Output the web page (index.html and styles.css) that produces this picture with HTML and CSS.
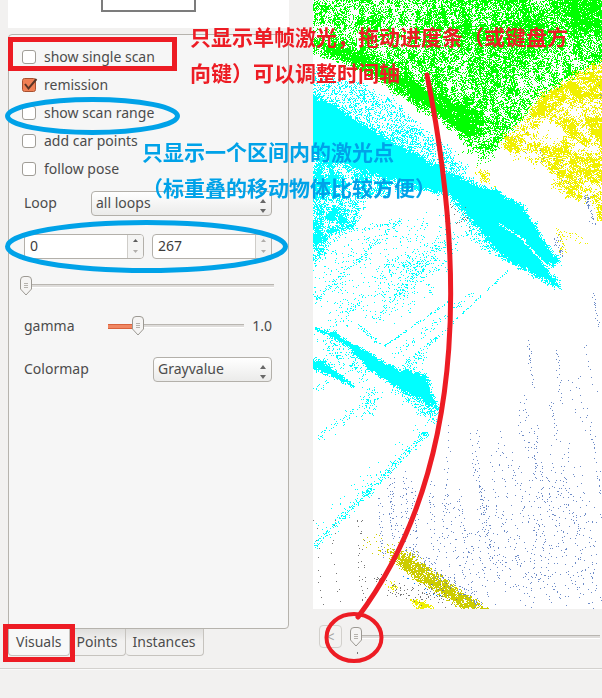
FILE: index.html
```html
<!DOCTYPE html>
<html lang="en">
<head>
<meta charset="utf-8">
<title>Point labeler</title>
<link rel="stylesheet" href="styles.css">
</head>
<body>
<main class="workspace">
  <section class="sidebar">
    <div class="preview"><div class="preview-frame"></div></div>
    <form class="panel">
      <label class="check"><input type="checkbox"><span>show single scan</span></label>
      <label class="check"><input type="checkbox" checked><span>remission</span></label>
      <label class="check"><input type="checkbox"><span>show scan range</span></label>
      <label class="check"><input type="checkbox"><span>add car points</span></label>
      <label class="check"><input type="checkbox"><span>follow pose</span></label>
      <div class="fields">
        <div class="row">
          <label class="name-short" for="loop">Loop</label>
          <span class="select grow">
            <select id="loop"><option>all loops</option></select>
            <svg class="arrows" viewBox="0 0 6 14"><path d="M0 4L3 0L6 4ZM0 10H6L3 14Z"/></svg>
          </span>
        </div>
        <div class="row spins">
          <span class="spin">
            <input type="text" value="0" aria-label="Range start">
            <span class="steps">
              <button type="button" aria-label="Increase start"><svg viewBox="0 0 5 3"><path d="M0 3L2.500 0L5 3Z"/></svg></button>
              <button type="button" class="off" aria-label="Decrease start"><svg viewBox="0 0 5 3"><path d="M0 0H5L2.500 3Z"/></svg></button>
            </span>
          </span>
          <span class="spin">
            <input type="text" value="267" aria-label="Range end">
            <span class="steps">
              <button type="button" class="off" aria-label="Increase end"><svg viewBox="0 0 5 3"><path d="M0 3L2.500 0L5 3Z"/></svg></button>
              <button type="button" class="off" aria-label="Decrease end"><svg viewBox="0 0 5 3"><path d="M0 0H5L2.500 3Z"/></svg></button>
            </span>
          </span>
        </div>
        <input class="slider range" type="range" min="0" max="100" value="0" aria-label="Scan">
        <div class="row">
          <label class="name" for="gamma">gamma</label>
          <input class="slider gamma grow" id="gamma" type="range" min="0" max="100" value="19">
          <output class="value" for="gamma">1.0</output>
        </div>
        <div class="row">
          <label class="name-long" for="map">Colormap</label>
          <span class="select grow">
            <select id="map"><option>Grayvalue</option></select>
            <svg class="arrows" viewBox="0 0 6 14"><path d="M0 4L3 0L6 4ZM0 10H6L3 14Z"/></svg>
          </span>
        </div>
      </div>
    </form>
    <nav class="tabs">
      <button class="tab active" type="button">Visuals</button>
      <button class="tab" type="button">Points</button>
      <button class="tab" type="button">Instances</button>
    </nav>
  </section>
  <section class="viewer">
    <canvas class="cloud" id="cloud"></canvas>
    <div class="timeline">
      <button class="prev" type="button">&lt;</button>
      <div class="track">
        <input class="slider" type="range" min="0" max="500" value="0" aria-label="Timeline">
        <i class="tick"></i>
      </div>
    </div>
  </section>
</main>
<footer class="status"></footer>

<div class="notes">
  <svg width="602" height="698" fill="none" stroke-width="5">
    <g stroke="#ed1c24">
      <rect x="10.500" y="39.500" width="164" height="29"/>
      <rect x="5.500" y="626.500" width="67" height="33"/>
      <ellipse cx="354" cy="637.500" rx="27.500" ry="23.500" stroke-width="4"/>
      <path d="M427 75C460 240 475 460 358 617" stroke-linecap="round"/>
    </g>
    <g stroke="#00a2e8">
      <ellipse cx="92.500" cy="116" rx="85" ry="16.500"/>
      <ellipse cx="146.500" cy="246.500" rx="139" ry="24"/>
    </g>
  </svg>
  <p class="note note-red" lang="zh">只显示单帧激光，拖动进度条（或键盘方<br>向键）可以调整时间轴</p>
  <p class="note note-blue" lang="zh">只显示一个区间内的激光点<br>（标重叠的移动物体比较方便）</p>
</div>
<script src="cloud.js"></script>
</body>
</html>
```
FILE: styles.css
```css
* { box-sizing: border-box; }

body {
  margin: 0;
  min-height: 100vh;
  display: flex;
  flex-direction: column;
  position: relative;
  background: #f2f1f0;
  color: #4c4c4c;
  font: 14px/20px "Noto Sans", "Open Sans", sans-serif;
}

button, input, select { font: inherit; color: inherit; margin: 0; }

.workspace {
  flex: 1;
  display: grid;
  grid-template-columns: 281px minmax(0, 1fr);
  gap: 24px;
  padding-left: 8px;
}

.sidebar { display: flex; flex-direction: column; padding-bottom: 12px; min-width: 0; }

.preview { height: 28px; margin-bottom: 6px; background: #fff; }
.preview-frame {
  width: 95px;
  height: 12px;
  margin-left: 93px;
  border: solid #7c7c7c;
  border-width: 0 2px 2px;
}

.panel {
  flex: 1;
  padding: 8px 12px 8px 13px;
  border: 1px solid #b6b3ad;
  border-radius: 4px 4px 4px 0;
  background: #f6f6f6;
}

.check { display: flex; align-items: center; gap: 8px; height: 28px; }
.check input {
  appearance: none;
  flex: none;
  width: 14px;
  height: 14px;
  border: 1px solid #a09d97;
  border-radius: 3px;
  background: #fff;
}
.check input:checked {
  width: 16px;
  height: 16px;
  margin-right: -2px;
  border: 0;
  background: url("data:image/svg+xml,%3Csvg xmlns='http://www.w3.org/2000/svg' viewBox='0 0 16 16'%3E%3Crect x='.5' y='1.500' width='13' height='13' rx='2' fill='%23f08055' stroke='%23a8502f'/%3E%3Cpath d='M3 7L6.500 11.500L14.500 2' fill='none' stroke='%235a3526' stroke-width='2'/%3E%3C/svg%3E") no-repeat;
}

.fields { display: grid; grid-template-columns: minmax(0, 1fr); gap: 19px; padding-top: 8px; }
.row { display: flex; align-items: center; height: 24px; padding: 0 4px 0 2px; }
.grow { flex: 1; min-width: 0; }
.name-short { width: 67px; }
.name { width: 84px; }
.name-long { width: 129px; }

.select { position: relative; height: 25px; }
.select select {
  appearance: none;
  width: 100%;
  height: 100%;
  padding: 0 20px 0 4px;
  border: 1px solid #b3b0aa;
  border-radius: 4px;
  background: linear-gradient(#fff, #ebebea);
}
.arrows {
  position: absolute;
  right: 6px;
  top: 8px;
  width: 6px;
  height: 14px;
  fill: #686868;
}

.spins { gap: 8px; }
.spin {
  display: flex;
  flex: 1;
  min-width: 0;
  height: 25px;
  border: 1px solid #b3b0aa;
  border-radius: 4px;
  background: #fff;
  overflow: hidden;
}
.spin input { flex: 1; min-width: 0; width: 0; padding: 0 5px; border: 0; background: none; color: #3c3c3c; }
.steps { display: flex; flex-direction: column; width: 16px; border-left: 1px solid #cfcdc9; }
.steps button {
  flex: 1;
  display: grid;
  place-items: center;
  padding: 0;
  border: 0;
  background: #f4f4f3;
  color: #5c5c5c;
}
.steps .off { color: #b0aeab; }
.steps svg { width: 5px; height: 3px; fill: currentColor; }

.slider {
  appearance: none;
  display: block;
  height: 20px;
  background: linear-gradient(#b9b6b1 0 1px, #dedcda 1px 3px, #fff 3px) center / calc(100% - 4px) 4px no-repeat;
}
.slider::-webkit-slider-thumb {
  appearance: none;
  width: 12px;
  height: 20px;
  background: url("data:image/svg+xml,%3Csvg xmlns='http://www.w3.org/2000/svg' viewBox='0 0 12 20'%3E%3Cpath d='M.5 4Q.5 .5 4 .5H8Q11.500 .5 11.500 4V13L6 19L.5 13Z' fill='%23f5f4f3' stroke='%239c9993'/%3E%3Cpath d='M4 7.500H8M4 9.500H8M4 11.500H8' stroke='%23b5b2ad'/%3E%3C/svg%3E");
}
.range { width: 256px; height: 18px; margin-left: -2px; }
.gamma {
  background:
    linear-gradient(#f08763, #f08763) 0 center / 30px 3px no-repeat,
    linear-gradient(#d9623c, #d9623c) 0 center / 30px 5px no-repeat,
    linear-gradient(#b9b6b1 0 1px, #dedcda 1px 3px, #fff 3px) center / 100% 4px no-repeat;
}
.value { width: 28px; text-align: right; }

.tabs { display: flex; align-items: flex-start; height: 27px; }
.tab {
  height: 27px;
  padding: 0 7px;
  border: 1px solid #c6c3be;
  border-top: 0;
  border-left: 0;
  border-radius: 0 0 4px 4px;
  background: linear-gradient(#dfdedc, #f2f1f0 12px);
}
.tab.active { border-left: 1px solid #b6b3ad; background: #f8f8f8; }

.viewer { display: flex; flex-direction: column; min-width: 0; }
.cloud { flex: 1; display: block; width: 100%; min-height: 0; background: #fff; }
.timeline { display: flex; gap: 8px; height: 59px; padding: 16px 0 0 6px; overflow: hidden; }
.prev {
  flex: none;
  width: 23px;
  height: 23px;
  padding: 0;
  border: 1px solid #d2d0cc;
  border-radius: 4px;
  background: #f3f2f1;
  color: #a5a3a0;
}
.track { flex: 1; min-width: 0; padding-top: 2px; }
.track .slider { width: 100%; }
.tick { display: block; width: 1px; height: 2px; margin: 5px 0 0 7px; background: #777; }

.status { height: 30px; border-top: 1px solid #d3d1ce; box-shadow: inset 0 1px #fafafa; }

.notes { position: absolute; inset: 0; overflow: hidden; pointer-events: none; }
.notes svg { display: block; }
.note {
  position: absolute;
  margin: 0;
  white-space: nowrap;
  font: bold 21px/36px "Noto Sans CJK SC", sans-serif;
}
.note-red { left: 190px; top: 18px; color: #ed1c24; }
.note-blue { left: 142px; top: 133px; color: #00a2e8; }
```
FILE: cloud.js
```js
const canvas = document.getElementById("cloud");
canvas.width = canvas.clientWidth;
canvas.height = canvas.clientHeight;
const ctx = canvas.getContext("2d");

let seed = 12345;
function rnd() {
  seed = (seed * 1664525 + 1013904223) >>> 0;
  return seed / 4294967296;
}
function gauss() { return rnd() + rnd() + rnd() - 1.5; }

function hash(x, y) {
  let h = (x * 374761393 + y * 668265263) | 0;
  h = Math.imul(h ^ (h >>> 13), 1274126177);
  return ((h ^ (h >>> 16)) >>> 0) / 4294967296;
}
function noise(x, y) {
  const i = Math.floor(x), j = Math.floor(y);
  const u = x - i, v = y - j;
  const a = hash(i, j) * (1 - u) + hash(i + 1, j) * u;
  const b = hash(i, j + 1) * (1 - u) + hash(i + 1, j + 1) * u;
  return a * (1 - v) + b * v;
}

// Signed distance to a polygon, positive inside.
function depth(p, x, y) {
  let inside = false, best = 1e9;
  for (let i = 0, j = p.length - 1; i < p.length; j = i++) {
    const [ax, ay] = p[i], [bx, by] = p[j];
    if ((ay > y) !== (by > y) && x < ((bx - ax) * (y - ay)) / (by - ay) + ax) inside = !inside;
    const dx = bx - ax, dy = by - ay;
    const t = Math.max(0, Math.min(1, ((x - ax) * dx + (y - ay) * dy) / (dx * dx + dy * dy)));
    best = Math.min(best, Math.hypot(x - ax - t * dx, y - ay - t * dy));
  }
  return inside ? best : -best;
}

// Scatter points in a polygon; patch is the strength of the clumping, sx/sy its size.
function area(color, density, feather, points, patch = 0, sx = 6, sy = 6) {
  ctx.fillStyle = color;
  const xs = points.map(q => q[0]), ys = points.map(q => q[1]);
  const x1 = Math.min(canvas.width, Math.max(...xs) + feather);
  const y1 = Math.min(canvas.height, Math.max(...ys) + feather);
  for (let y = Math.max(0, Math.min(...ys) - feather); y < y1; y++) {
    for (let x = Math.max(0, Math.min(...xs) - feather); x < x1; x++) {
      const d = depth(points, x, y) + (noise(x / 4 + 50, y / 4) - 0.5) * feather * 1.5;
      if (d < -feather) continue;
      let k = density * Math.min(1, (d + feather) / (2 * feather));
      if (patch) k *= Math.max(0, 1 + patch * (noise(x / sx, y / sy) + 0.5 * noise(x / sx * 2.5, y / sy * 2.5) - 0.75) * 2);
      if (rnd() < k) ctx.fillRect(x, y, 1, 1);
    }
  }
}

function streak(color, x0, y0, x1, y1, count, spread) {
  ctx.fillStyle = color;
  for (let i = 0; i < count; i++) {
    const t = rnd();
    ctx.fillRect(Math.round(x0 + (x1 - x0) * t + gauss() * spread), Math.round(y0 + (y1 - y0) * t + gauss() * spread), 1, 1);
  }
}

const GREEN = "#00ff00", CYAN = "#00ffff", YELLOW = "#f0f000", OLIVE = "#cccc00", BLUE = "#6e8cc8", GRAY = "#777";

// Foliage
area(GREEN, 0.5, 5, [[-9,-9],[299,-9],[299,58],[265,74],[240,90],[217,106],[205,122],[188,140],[170,158],[158,150],[150,130],[125,110],[100,92],[60,70],[20,56],[-9,48]], 0.9, 4, 7);
area(GREEN, 0.4, 14, [[120,-20],[310,-20],[310,38],[265,40],[225,55],[190,75],[160,60],[140,35]], 0.8, 7, 12);
area(GREEN, 0.75, 8, [[230,-20],[310,-20],[310,34],[262,28]], 0.6, 8, 8);
area(GREEN, 0.95, 4, [[0,38],[30,45],[60,60],[85,72],[110,86],[135,98],[168,113],[171,123],[156,141],[143,132],[125,116],[100,104],[75,84],[40,66],[10,54]], 0.15, 5, 5);
area(GREEN, 0.12, 6, [[150,120],[200,105],[188,140],[172,165],[150,150]]);

// Vehicles and walls
area(CYAN, 0.34, 4, [[0,70],[40,82],[80,100],[110,128],[155,168],[135,178],[70,140],[0,96]], 0.5, 5, 4);
area(CYAN, 1, 3, [[-6,90],[25,107],[50,124],[75,138],[105,155],[140,174],[180,188],[210,206],[228,235],[246,262],[240,266],[230,262],[249,288],[240,287],[215,272],[190,258],[163,227],[137,197],[100,186],[60,174],[-6,155]]);
area(CYAN, 0.6, 4, [[-6,150],[50,172],[125,188],[80,190],[50,196],[42,228],[20,235],[12,250],[-6,275]], 1.1, 6, 7);
area(CYAN, 0.25, 4, [[140,205],[165,220],[190,255],[175,250],[155,235]], 0.6);
area(CYAN, 0.05, 8, [[0,245],[50,225],[140,215],[145,250],[110,300],[70,320],[20,320],[0,300]], 1.1, 9, 7);
area(CYAN, 0.12, 5, [[70,265],[110,248],[135,240],[100,285],[70,300]], 1.1, 5, 4);
streak(CYAN, 0, 302, 88, 218, 120, 3);
streak(CYAN, 50, 230, 78, 222, 22, 1);
streak(CYAN, 60, 320, 135, 240, 95, 3);
streak(CYAN, 0, 340, 50, 300, 40, 5);
streak(CYAN, 70, 346, 140, 298, 75, 1);
streak(CYAN, 90, 364, 140, 324, 70, 2);
streak(CYAN, 136, 325, 195, 270, 65, 0.7);
streak(CYAN, 80, 356, 165, 288, 80, 4);
streak(CYAN, 44, 324, 66, 344, 45, 2);
area(CYAN, 1, 2, [[-5,326],[22,332],[36,342],[50,349],[87,370],[110,373],[117,390],[127,411],[107,399],[80,386],[54,367],[30,343]]);
area(CYAN, 0.4, 4, [[86,368],[112,373],[118,396],[127,411],[124,424],[108,412],[80,390]], 0.6, 4, 4);
area(CYAN, 1, 2, [[-5,356],[12,362],[24,372],[40,386],[22,378],[-5,366]]);
area(CYAN, 0.17, 5, [[8,330],[28,342],[60,370],[50,378],[18,362]], 1, 5, 5);
area(CYAN, 0.22, 4, [[52,385],[63,388],[60,412],[50,418]], 0.7, 4, 4);
streak(CYAN, 92, 372, 112, 350, 70, 5);
streak(CYAN, 0, 440, 64, 394, 75, 7);
streak(CYAN, 0, 390, 25, 375, 20, 3);
streak(CYAN, 0, 546, 113, 432, 340, 4);
streak(CYAN, 50, 495, 58, 490, 35, 3);
streak(CYAN, 108, 433, 114, 434, 30, 2);
streak(CYAN, 0, 528, 113, 425, 45, 9);
streak("#fff", 184, 222, 212, 240, 55, 1);
streak("#fff", 208, 238, 232, 264, 65, 1);

// Shrubs
area(YELLOW, 0.85, 5, [[299,56],[276,68],[258,77],[244,87],[222,101],[212,122],[221,125],[232,112],[252,98],[268,102],[299,86]], 0.8, 5, 5);
area(YELLOW, 0.42, 6, [[299,90],[252,98],[212,122],[188,140],[200,154],[222,160],[240,176],[262,196],[285,204],[299,175]], 1.5, 7, 5);
area(YELLOW, 0.3, 5, [[225,150],[262,152],[299,150],[299,178],[262,180],[235,168]], 1, 5, 4);
area(YELLOW, 0.75, 4, [[276,118],[299,116],[299,136],[278,136]], 0.5);
area(YELLOW, 0.6, 4, [[238,180],[262,184],[278,200],[258,199]], 0.7);
area(YELLOW, 0.8, 3, [[192,136],[202,138],[204,148],[192,149]], 0.3);
area(YELLOW, 0.6, 3, [[163,170],[172,170],[180,186],[170,181]], 0.3);
area(YELLOW, 0.65, 2, [[284,204],[299,202],[299,220],[285,220]], 0.5);
streak(YELLOW, 246, 228, 250, 254, 40, 4);
streak(YELLOW, 252, 232, 269, 240, 20, 5);
area("#fff", 0.9, 4, [[224,130],[240,124],[250,136],[240,147],[228,145]]);

// Kerb
area(OLIVE, 0.85, 3, [[76,556],[92,553],[127,576],[150,592],[173,609],[150,609],[128,594],[100,577],[84,562]], 0.4, 4, 4);
area(OLIVE, 0.3, 4, [[76,552],[95,550],[130,580],[140,600],[100,580]], 0.4);
area(YELLOW, 0.8, 2, [[97,599],[108,599],[121,609],[105,609]], 0.3);
streak(YELLOW, 76, 583, 82, 587, 35, 4);
streak(OLIVE, 58, 542, 85, 556, 45, 9);
streak(GRAY, 75, 590, 140, 596, 90, 9);
streak(GRAY, 62, 580, 68, 578, 22, 3);
streak(BLUE, 95, 548, 165, 602, 100, 6);
streak("#0080ff", 90, 575, 130, 600, 9, 4);

// Ground returns, falling in thin arcs
function arc(color, x, y, len, lean, gap) {
  ctx.fillStyle = color;
  for (let d = 0; d < len; d += 1 + rnd() * gap) {
    ctx.fillRect(Math.round(x + lean * d * d / len + gauss() * 2.4), Math.round(y + d), 1, 1);
  }
}
for (let i = 0; i < 50; i++) {
  const x = 130 + ((i * 37) % 158);
  const top = 470 - (x - 110) * 0.9;
  const y = top + rnd() * Math.max(40, 570 - top);
  arc(BLUE, x, y, 35 + rnd() * 70, 0.15 + rnd() * 0.35, 9);
}
for (let i = 0; i < 13; i++) arc(BLUE, 62 + rnd() * 60, 470 + rnd() * 30, 60, 0.08, 7);
arc(BLUE, 136, 425, 180, -0.12, 7);
arc(BLUE, 164, 430, 150, 0.15, 4);
arc(BLUE, 216, 340, 50, 0.1, 3);
arc(BLUE, 244, 350, 55, 0.1, 3);
arc(BLUE, 281, 293, 35, 0.15, 2);
arc(BLUE, 222, 425, 55, 0, 3);
arc(BLUE, 238, 402, 40, 0.2, 3);
for (const x of [1, 18, 42, 46]) arc(GRAY, x + 2, 520, 85, 0.08, 12);
streak(BLUE, 272, 195, 281, 224, 40, 3);
streak(BLUE, 244, 235, 248, 257, 26, 4);
streak(BLUE, 286, 82, 288, 102, 12, 3);
streak(BLUE, 185, 120, 289, 205, 22, 12);
streak(BLUE, 145, 520, 240, 600, 110, 30);
streak(BLUE, 230, 480, 285, 600, 110, 30);
streak(GRAY, 128, 195, 160, 230, 22, 8);
```
